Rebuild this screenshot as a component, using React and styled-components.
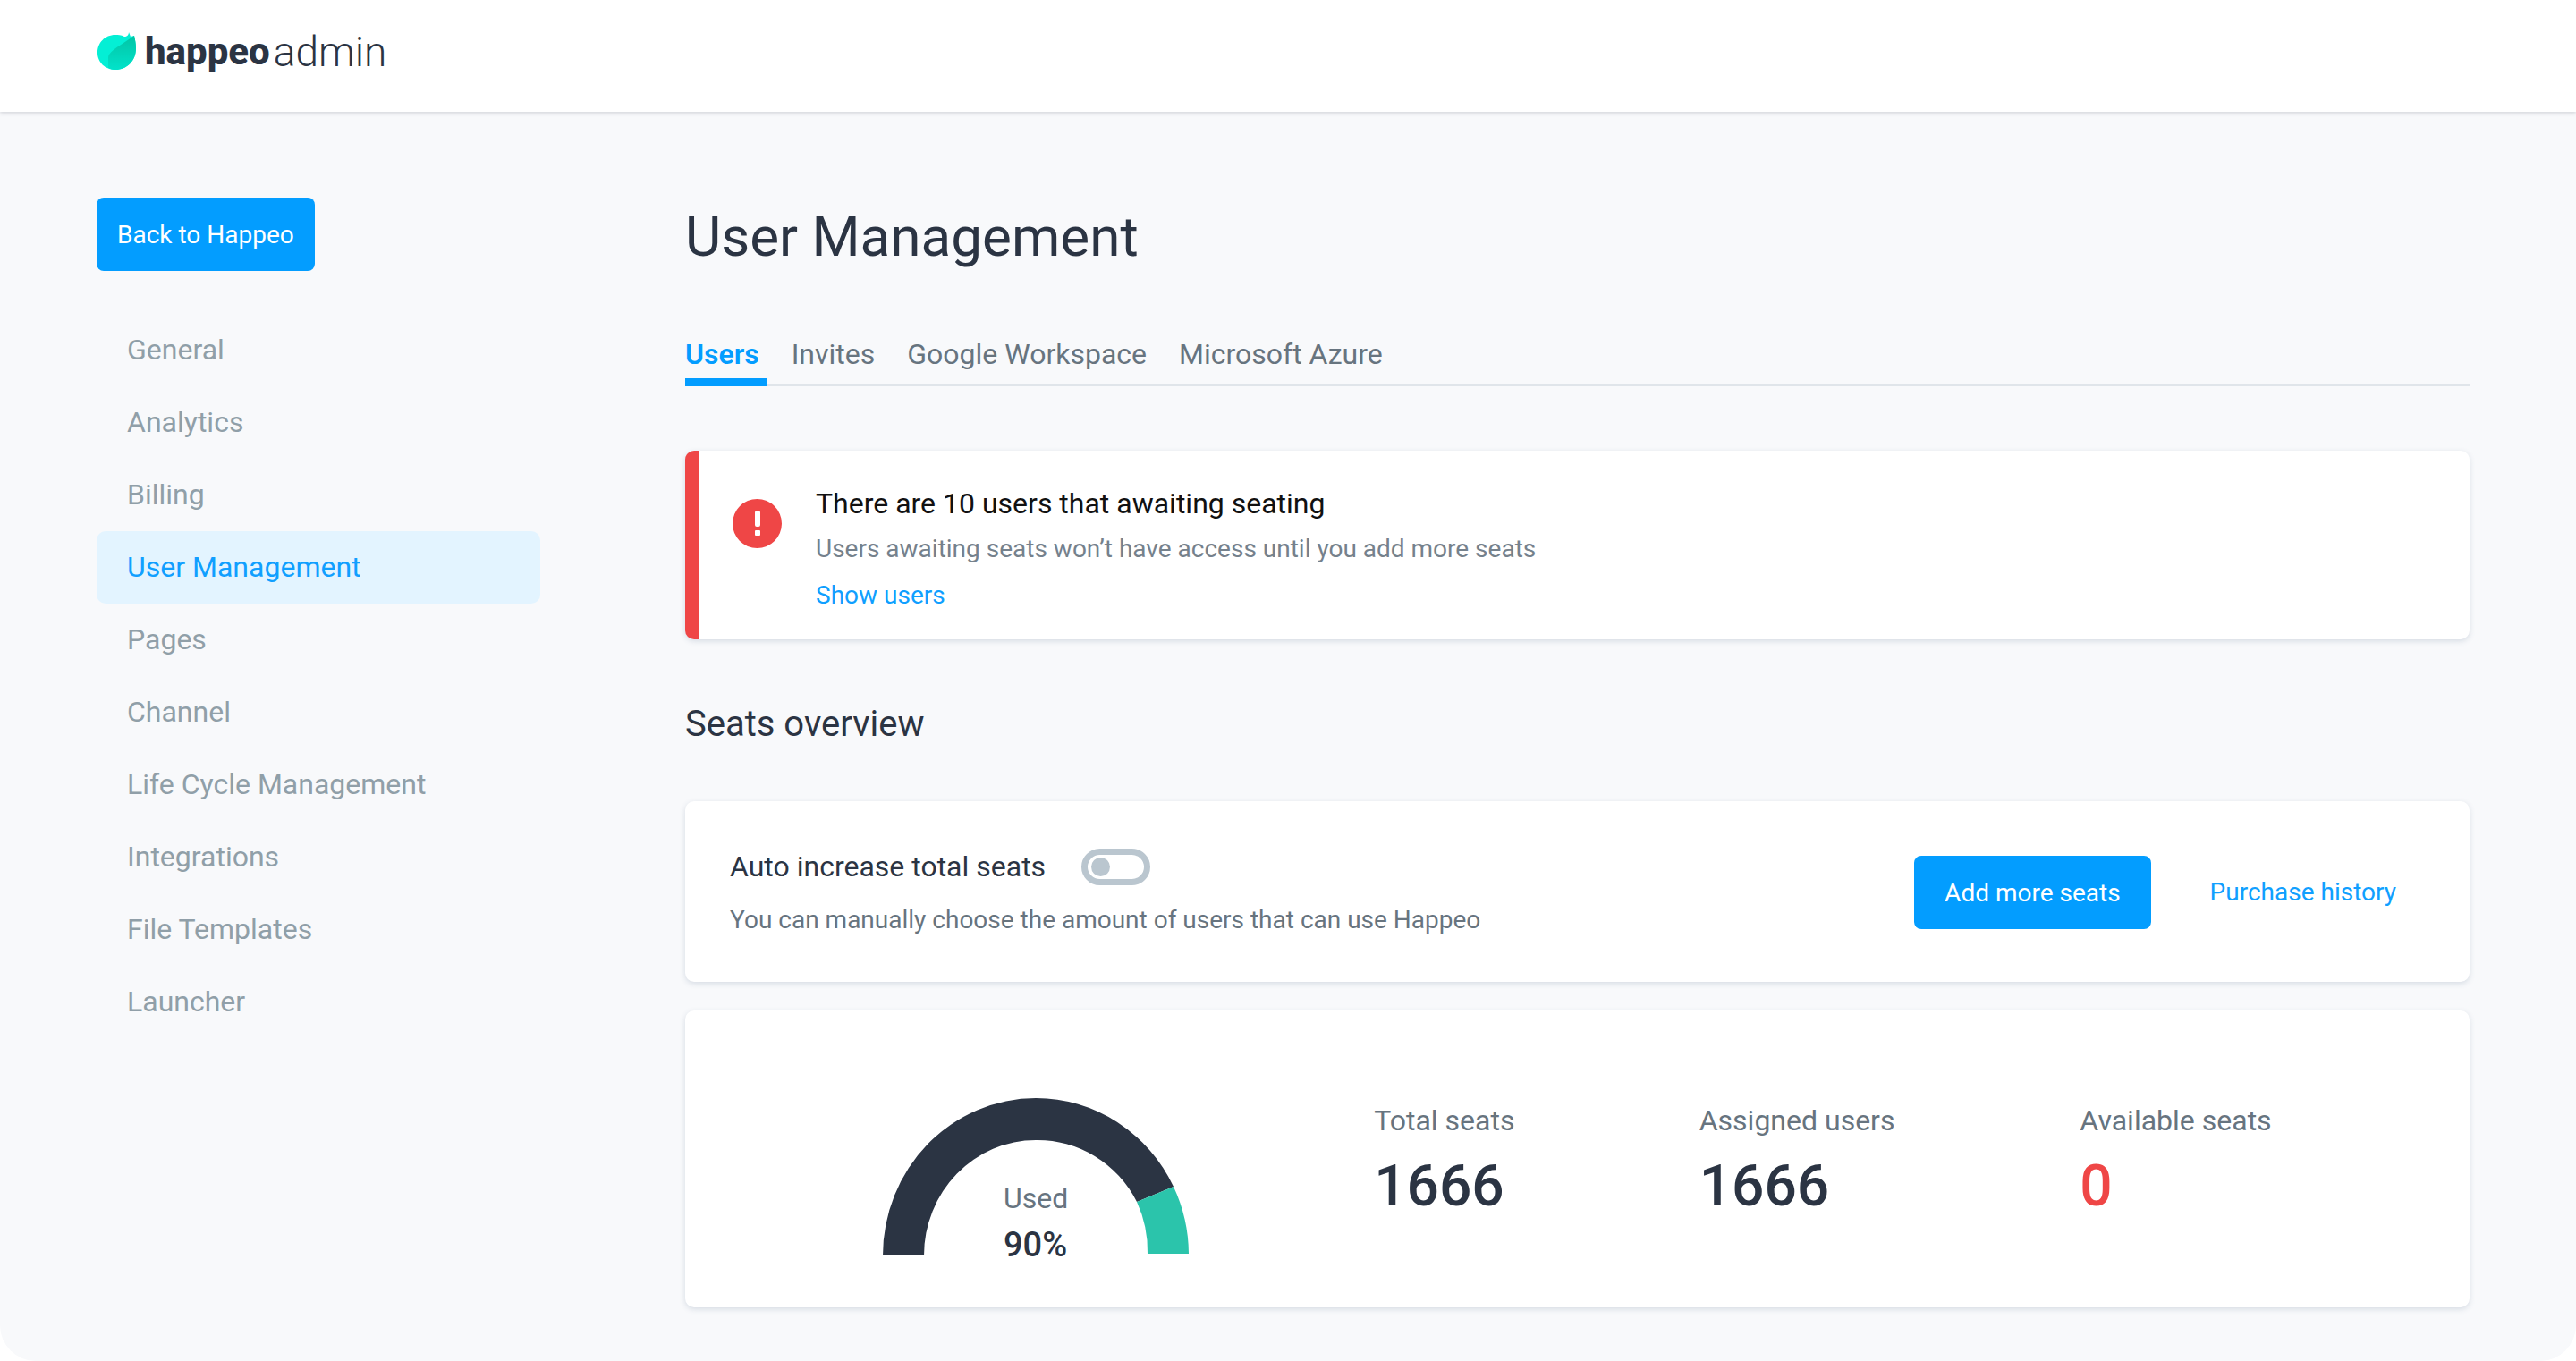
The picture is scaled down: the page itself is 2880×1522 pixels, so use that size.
import React, { useState } from "react";
import styled, { createGlobalStyle } from "styled-components";

const GlobalStyle = createGlobalStyle`
  * {
    box-sizing: border-box;
  }
  body {
    margin: 0;
    background-color: #fff;
    color: #2b3443;
    font-family: Roboto, "Liberation Sans", sans-serif;
    font-size: 32px;
  }
  h1, h2, h3, p, dl, dt, dd, ul {
    margin: 0;
    padding: 0;
    font-weight: 400;
  }
  a {
    text-decoration: none;
  }
  button {
    font-family: inherit;
    cursor: pointer;
  }
`;

const Page = styled.div`
  min-height: 100vh;
  background-color: #f8f9fb;
  border-radius: 0 0 40px 40px;
`;

const Header = styled.header`
  display: flex;
  align-items: center;
  height: 125px;
  padding: 0 108px 10px;
  background-color: #fff;
  box-shadow: 0 2px 4px rgba(43, 52, 67, 0.16);
`;

const Logo = styled.a`
  display: flex;
  align-items: center;
  color: #2b3443;
`;

const LogoMark = styled.svg`
  width: 44px;
  height: 44px;
  margin-right: 10px;
`;

const LogoName = styled.span`
  font-size: 42px;
  line-height: 56px;
  font-weight: 800;
`;

const LogoSuffix = styled.span`
  margin-left: 4px;
  font-size: 46px;
  line-height: 56px;
  font-weight: 300;
`;

const Body = styled.div`
  display: flex;
  gap: 162px;
  padding: 96px 119px 59px 108px;
`;

const Sidebar = styled.aside`
  flex: 0 0 496px;
`;

const Button = styled.button`
  height: 82px;
  padding: 0 ${(props) => (props.$wide ? 34 : 23)}px;
  border: 0;
  border-radius: 8px;
  background-color: #039dff;
  color: #fff;
  font-size: 28px;
`;

const NavList = styled.ul`
  margin-top: 48px;
  list-style: none;
`;

const NavLink = styled.a`
  display: block;
  padding-left: 34px;
  border-radius: 10px;
  line-height: 81px;
  color: ${(props) => (props.$active ? "#109fff" : "#909fa8")};
  background-color: ${(props) => (props.$active ? "#e3f4ff" : "transparent")};
`;

const Main = styled.main`
  flex: 1;
  min-width: 0;
  padding-top: 4px;
`;

const Title = styled.h1`
  font-size: 62px;
  line-height: 80px;
`;

const Tabs = styled.nav`
  display: flex;
  gap: 28px;
  margin-top: 67px;
  border-bottom: 3px solid #e0e5ea;
`;

const Tab = styled.a`
  margin-bottom: -3px;
  padding: 0 8px 3px 0;
  border-bottom: 9px solid
    ${(props) => (props.$active ? "#039dff" : "transparent")};
  line-height: 48px;
  font-weight: ${(props) => (props.$active ? 600 : 400)};
  color: ${(props) => (props.$active ? "#039dff" : "#67747f")};
`;

const Card = styled.section`
  border-radius: 10px;
  background-color: #fff;
  box-shadow: 0 2px 6px rgba(60, 90, 120, 0.18);
`;

const Alert = styled(Card)`
  display: flex;
  gap: 38px;
  margin-top: 72px;
  padding: 34px 40px 23px 37px;
  border-left: 16px solid #ef4646;
`;

const AlertIcon = styled.svg`
  width: 55px;
  height: 55px;
  margin-top: 20px;
`;

const AlertTitle = styled.h2`
  font-size: 32px;
  line-height: 50px;
  color: #111;
`;

const AlertText = styled.p`
  font-size: 28px;
  line-height: 52px;
  color: #75818c;
`;

const TextLink = styled.a`
  font-size: 28px;
  line-height: 52px;
  color: #109fff;
`;

const SectionTitle = styled.h2`
  margin: 71px 0 62px;
  font-size: 40px;
  line-height: 48px;
`;

const SeatsCard = styled(Card)`
  display: flex;
  align-items: center;
  padding: 49px 82px 47px 50px;
`;

const SeatsInfo = styled.div`
  flex: 1;
`;

const SwitchLabel = styled.label`
  display: flex;
  align-items: center;
  gap: 40px;
  line-height: 48px;
`;

const Switch = styled.input`
  appearance: none;
  display: flex;
  width: 77px;
  height: 41px;
  margin: 0;
  padding: 3px 4px;
  border: 7px solid #bac6cf;
  border-radius: 21px;
  cursor: pointer;

  &::before {
    content: "";
    width: 21px;
    height: 21px;
    border-radius: 50%;
    background-color: #bac6cf;
  }

  &:checked {
    justify-content: flex-end;
    border-color: #039dff;
  }

  &:checked::before {
    background-color: #039dff;
  }
`;

const Hint = styled.p`
  margin-top: 14px;
  font-size: 28px;
  line-height: 44px;
  color: #67747f;
`;

const Actions = styled.div`
  display: flex;
  align-items: center;
  gap: 66px;
`;

const UsageCard = styled(Card)`
  display: grid;
  grid-template-columns: 769fr 363fr 425fr 435fr;
  margin-top: 32px;
  padding: 98px 0 44px;
`;

const Gauge = styled.div`
  display: grid;
  justify-content: center;
  padding-left: 14px;

  > * {
    grid-area: 1 / 1;
  }
`;

const GaugeArc = styled.svg`
  width: 342px;
  height: 178px;
`;

const GaugeText = styled.dl`
  justify-self: center;
  padding-top: 86px;
`;

const GaugeLabel = styled.dt`
  line-height: 52px;
  color: #67747f;
`;

const GaugeValue = styled.dd`
  font-size: 38px;
  line-height: 52px;
  font-weight: 500;
`;

const Stat = styled.dl`
  padding-top: 5px;
`;

const StatLabel = styled.dt`
  line-height: 40px;
  color: #67747f;
`;

const StatValue = styled.dd`
  margin-top: 18px;
  font-size: 64px;
  line-height: 72px;
  font-weight: 500;
  color: ${(props) => (props.$danger ? "#ef4646" : "#2b3443")};
`;

const navItems = [
  "General",
  "Analytics",
  "Billing",
  "User Management",
  "Pages",
  "Channel",
  "Life Cycle Management",
  "Integrations",
  "File Templates",
  "Launcher",
];

const tabs = ["Users", "Invites", "Google Workspace", "Microsoft Azure"];

const stats = [
  { label: "Total seats", value: 1666 },
  { label: "Assigned users", value: 1666 },
  { label: "Available seats", value: 0, danger: true },
];

const App = () => {
  const [autoIncrease, setAutoIncrease] = useState(false);

  return (
    <>
      <GlobalStyle />
      <Page>
        <Header>
          <Logo href="#">
            <LogoMark viewBox="0 0 44 44" aria-hidden="true">
              <defs>
                <linearGradient id="leaf" x1="0" y1="0" x2="0" y2="1">
                  <stop offset="0" stopColor="#02c4a5" />
                  <stop offset="1" stopColor="#02e3ca" />
                </linearGradient>
              </defs>
              <path
                d="M36 0 C36 3 34 5 31 5 C27 3 24 3 21 3 C9 3 1 12 1 23 C1 34 10 42 21 42 C34 42 44 32 44 18 C44 13 43 8 42 4 L38 5 Z"
                fill="#04efd5"
              />
              <path
                d="M42 4 C34 10 19 18 14 25 C13 26 13 28 13 30 V40 C16 41 18 42 21 42 C34 42 44 32 44 18 C44 13 43 8 42 4 Z"
                fill="url(#leaf)"
              />
            </LogoMark>
            <LogoName>happeo</LogoName>
            <LogoSuffix>admin</LogoSuffix>
          </Logo>
        </Header>
        <Body>
          <Sidebar>
            <Button type="button">Back to Happeo</Button>
            <nav>
              <NavList>
                {navItems.map((item) => (
                  <li key={item}>
                    <NavLink href="#" $active={item === "User Management"}>
                      {item}
                    </NavLink>
                  </li>
                ))}
              </NavList>
            </nav>
          </Sidebar>
          <Main>
            <Title>User Management</Title>
            <Tabs>
              {tabs.map((tab) => (
                <Tab key={tab} href="#" $active={tab === "Users"}>
                  {tab}
                </Tab>
              ))}
            </Tabs>
            <Alert>
              <AlertIcon viewBox="0 0 55 55" aria-hidden="true">
                <circle cx="27.5" cy="27.5" r="27.5" fill="#ef4646" />
                <rect x="25" y="13" width="6" height="18" rx="2" fill="#fff" />
                <rect x="25" y="35" width="6" height="6" rx="1" fill="#fff" />
              </AlertIcon>
              <div>
                <AlertTitle>There are 10 users that awaiting seating</AlertTitle>
                <AlertText>
                  Users awaiting seats won’t have access until you add more
                  seats
                </AlertText>
                <TextLink href="#">Show users</TextLink>
              </div>
            </Alert>
            <SectionTitle>Seats overview</SectionTitle>
            <SeatsCard>
              <SeatsInfo>
                <SwitchLabel>
                  Auto increase total seats
                  <Switch
                    type="checkbox"
                    role="switch"
                    checked={autoIncrease}
                    onChange={(e) => setAutoIncrease(e.target.checked)}
                  />
                </SwitchLabel>
                <Hint>
                  You can manually choose the amount of users that can use
                  Happeo
                </Hint>
              </SeatsInfo>
              <Actions>
                <Button type="button" $wide>
                  Add more seats
                </Button>
                <TextLink href="#">Purchase history</TextLink>
              </Actions>
            </SeatsCard>
            <UsageCard>
              <Gauge>
                <GaugeArc viewBox="0 0 342 178" aria-hidden="true">
                  <path
                    d="M0 176 A171 176 0 0 1 171 0 A171 176 0 0 1 325 99 L284 116 A125 129 0 0 0 171 47 A125 129 0 0 0 46 176 Z"
                    fill="#2b3443"
                  />
                  <path
                    d="M325 99 A171 176 0 0 1 342 174 H296 A125 129 0 0 0 284 116 Z"
                    fill="#2bc4ab"
                  />
                </GaugeArc>
                <GaugeText>
                  <GaugeLabel>Used</GaugeLabel>
                  <GaugeValue>90%</GaugeValue>
                </GaugeText>
              </Gauge>
              {stats.map((stat) => (
                <Stat key={stat.label}>
                  <StatLabel>{stat.label}</StatLabel>
                  <StatValue $danger={stat.danger}>{stat.value}</StatValue>
                </Stat>
              ))}
            </UsageCard>
          </Main>
        </Body>
      </Page>
    </>
  );
};

export default App;
